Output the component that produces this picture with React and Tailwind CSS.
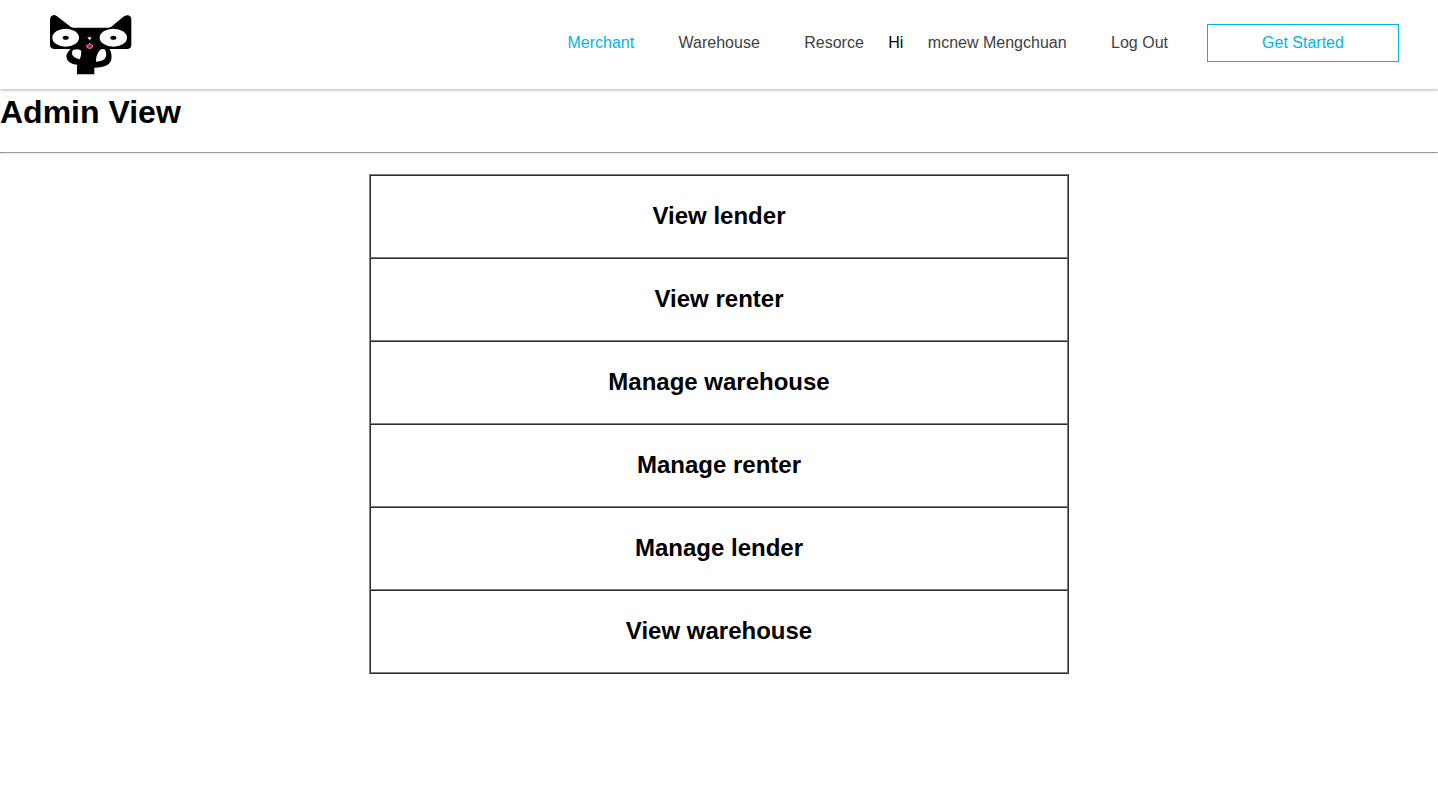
const actions = [
  'View lender',
  'View renter',
  'Manage warehouse',
  'Manage renter',
  'Manage lender',
  'View warehouse',
];

function CatLogo() {
  return (
    <svg
      viewBox="27 27 249 183"
      className="h-[61px] w-[83px]"
      role="img"
      aria-label="Home"
    >
      <path
        d="M30 46 Q30 31 42 30 Q47 30 54 36 L93 66 Q97 69 103 68 H203 Q209 68 213 66 L250 35 Q258 29 265 31 Q274 34 274 44 V119 Q274 130 263 132 H209 Q218 151 213 167 Q206 187 163 188 V208 H111 V179 Q82 177 79 155 Q79 144 92 132 H42 Q30 130 30 119 Z"
        fill="#000"
      />
      <ellipse cx="77" cy="98" rx="40" ry="27" fill="#fff" />
      <ellipse cx="220" cy="98" rx="41" ry="27" fill="#fff" />
      <ellipse cx="77" cy="98" rx="9" ry="6" fill="#000" />
      <ellipse cx="220" cy="98" rx="9" ry="6" fill="#000" />
      <path d="M142 97 H155 L149 106 Z" fill="#fff" />
      <path
        d="M139 121 L146 119 L149 114 L152 119 L159 121 Q158 131 149 131 Q140 131 139 121 Z"
        fill="#d5104c"
        stroke="#f4bccb"
        strokeWidth="2"
      />
      <path
        d="M102 134 Q113 130 124 137 Q124 153 119 163 Q107 162 100 154 Q93 146 97 138 Q99 134 102 134 Z"
        fill="#fff"
      />
      <path
        d="M184 133 Q193 131 196 135 Q201 147 197 157 Q191 170 168 170 Q168 151 177 139 Q180 134 184 133 Z"
        fill="#fff"
      />
    </svg>
  );
}

export default function App() {
  return (
    <div className="min-h-screen bg-white font-['Liberation_Sans',Arial,sans-serif] text-base text-black">
      <header className="flex items-start justify-between bg-white pt-3.5 pr-[39px] pb-3.5 pl-[49px] shadow-[0_1px_3px_rgba(0,0,0,0.3)]">
        <a href="#home">
          <CatLogo />
        </a>
        <nav className="flex items-center gap-[19px] pt-2.5">
          <div className="text-[#404040]">
            <a href="#merchant" className="px-5 text-[#00b5e5]">Merchant</a>{' '}
            <a href="#warehouse" className="px-5">Warehouse</a>{' '}
            <a href="#resorce" className="px-5">Resorce</a>{' '}
            <span className="text-black">Hi</span>{' '}
            <a href="#profile" className="px-5">mcnew Mengchuan</a>{' '}
            <a href="#logout" className="px-5">Log Out</a>
          </div>
          <button
            type="button"
            className="h-[38px] w-48 border border-[#00b5e5] text-[#00b5e5]"
          >
            Get Started
          </button>
        </nav>
      </header>
      <main>
        <h1 className="pt-[5px] text-[32px] leading-9 font-bold">Admin View</h1>
        <hr className="mt-[22px] mb-5 border border-t-[#9a9a9a] border-r-[#eeeeee] border-b-[#eeeeee] border-l-[#9a9a9a]" />
        <table className="mx-auto w-full max-w-[700px] border-separate border-spacing-0 border border-t-[#808080] border-r-[#2c2c2c] border-b-[#2c2c2c] border-l-[#808080]">
          <tbody>
            {actions.map((label) => (
              <tr key={label}>
                <td className="border border-t-[#2c2c2c] border-r-[#808080] border-b-[#808080] border-l-[#2c2c2c] pt-[26px] pb-[27px] text-center">
                  <h2 className="text-2xl leading-7 font-bold">
                    <a href="#action">{label}</a>
                  </h2>
                </td>
              </tr>
            ))}
          </tbody>
        </table>
      </main>
    </div>
  );
}
